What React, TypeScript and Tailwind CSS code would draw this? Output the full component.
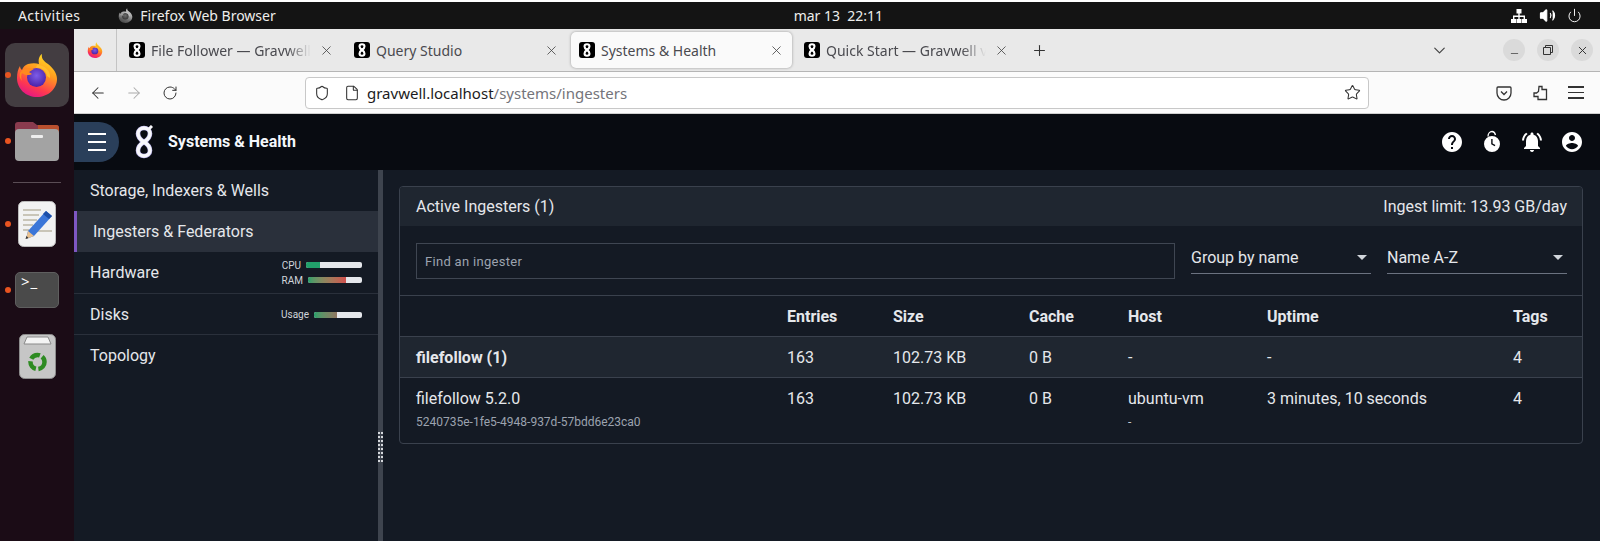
// Dependencies.
import { ArrowLeft, ArrowRight, ChevronDown, File, Minus, Plus, Power, RotateCw, Shield, Star, Volume2, X } from "lucide-react"

const uiFont = "font-['Noto_Sans','Open_Sans',sans-serif]"
const appFont = "font-['Roboto',sans-serif]"

const mdHelp =
	"M12 2C6.48 2 2 6.48 2 12s4.48 10 10 10 10-4.48 10-10S17.52 2 12 2zm1 17h-2v-2h2v2zm2.07-7.75l-.9.92C13.45 12.9 13 13.5 13 15h-2v-.5c0-1.1.45-2.1 1.17-2.83l1.24-1.26c.37-.36.59-.86.59-1.41 0-1.1-.9-2-2-2s-2 .9-2 2H8c0-2.21 1.79-4 4-4s4 1.79 4 4c0 .88-.36 1.68-.93 2.25z"
const mdBell =
	"M7.58 4.08L6.15 2.65C3.75 4.48 2.17 7.3 2.03 10.5h2c.15-2.65 1.51-4.97 3.55-6.42zm12.39 6.42h2c-.15-3.2-1.73-6.02-4.12-7.85l-1.42 1.43c2.02 1.45 3.39 3.77 3.54 6.42zM18 11c0-3.07-1.64-5.64-4.5-6.32V4c0-.83-.67-1.5-1.5-1.5s-1.5.67-1.5 1.5v.68C7.63 5.36 6 7.92 6 11v5l-2 2v1h16v-1l-2-2v-5zm-6 11c.14 0 .27-.01.4-.04.65-.14 1.18-.58 1.44-1.18.1-.24.15-.5.15-.78h-4c.01 1.1.9 2 2.01 2z"
const mdUser =
	"M12 2C6.48 2 2 6.48 2 12s4.48 10 10 10 10-4.48 10-10S17.52 2 12 2zm0 3c1.66 0 3 1.34 3 3s-1.34 3-3 3-3-1.34-3-3 1.34-3 3-3zm0 14.2c-2.5 0-4.71-1.28-6-3.22.03-1.99 4-3.08 6-3.08 1.99 0 5.97 1.09 6 3.08-1.29 1.94-3.5 3.22-6 3.22z"

const eightPath =
	"M9 17C14 14 15 11 15 8.500 15 5 12 3 9 3 6 3 3 5 3 8.500 3 11 4 14 9 17 14 20 15 23 15 25.500 15 29 12 31 9 31 6 31 3 29 3 25.500 3 23 4 20 9 17Z"

// Firefox logo.
function Firefox({ id, className }: { id: string; className: string }) {
	return (
		<svg viewBox="0 0 44 44" className={className}>
			<defs>
				<linearGradient id={`${id}-a`} x1="0.75" y1="0" x2="0.3" y2="1">
					<stop offset="0" stopColor="#ffe226" />
					<stop offset="0.4" stopColor="#ff9a1f" />
					<stop offset="0.75" stopColor="#ff3a4e" />
					<stop offset="1" stopColor="#e31587" />
				</linearGradient>
				<radialGradient id={`${id}-b`} cx="0.5" cy="0.4" r="0.6">
					<stop offset="0" stopColor="#7d5ce8" />
					<stop offset="1" stopColor="#4b22a8" />
				</radialGradient>
			</defs>
			<path
				d="M27 1c-1 5 2 7 6 10 5 4 9 9 9 15 0 10-9 18-20 18S2 36 2 25c0-5 1-9 3-12 0 2 1 3 2 4 1-3 3-5 6-6 4-1 8-1 11 0-1-4 0-8 3-10z"
				fill={`url(#${id}-a)`}
			/>
			<circle cx="21.5" cy="24.5" r="9.5" fill={`url(#${id}-b)`} />
			<path d="M21 15c5-1 10 2 11 8l3 2c1-7-5-13-13-13z" fill="#ffbd2e" />
			<path d="M5 20c3-5 9-6 14-4-2 1-3 2-5 3l3 2c-3 2-8 1-10-1-1 2-1 5 0 8-2-2-3-5-2-8z" fill="#ff8a1f" />
		</svg>
	)
}

// Gravwell "8" mark.
function GravMark() {
	return (
		<svg viewBox="0 0 18 34" className="h-[34px] w-[18px]" fill="none">
			<path d={eightPath} stroke="#b9b4e8" strokeWidth="4.6" />
			<path d={eightPath} stroke="#f7f7fb" strokeWidth="3.4" />
			<path d="M13 5 17 1" stroke="#f7f7fb" strokeWidth="3" />
		</svg>
	)
}

function Favicon() {
	return (
		<div className="flex h-4 w-4 shrink-0 items-center justify-center rounded-[3px] bg-black">
			<svg viewBox="0 0 18 34" className="h-[14px] w-[8px]" fill="none">
				<path d={eightPath} stroke="#fff" strokeWidth="5" />
			</svg>
		</div>
	)
}

function Tab({ title, active, fade }: { title: string; active?: boolean; fade?: boolean }) {
	return (
		<div
			className={`flex h-9 w-[221px] items-center rounded-[5px] pr-2 pl-2 ${
				active ? "bg-[#fafafa] shadow-[0_0_3px_rgba(0,0,0,0.35)]" : ""
			}`}
		>
			<Favicon />
			<span
				className={`ml-[6px] min-w-0 flex-1 overflow-hidden whitespace-nowrap text-[#4a4a4f] text-[14px] ${uiFont} ${
					fade ? "[mask-image:linear-gradient(to_right,black_85%,transparent)]" : ""
				}`}
			>
				{title}
			</span>
			<X className="ml-2 h-[15px] w-[15px] shrink-0 text-[#444]" strokeWidth={1.3} />
		</div>
	)
}

function WindowButton({ children }: { children: React.ReactNode }) {
	return <div className="flex h-[22px] w-[22px] items-center justify-center rounded-full bg-[#dadada] text-[#333]">{children}</div>
}

function DockItem({ running, children }: { running?: boolean; children: React.ReactNode }) {
	return (
		<div className="relative flex h-[66px] w-full items-center justify-center">
			{running && <span className="absolute top-[30px] left-[5px] h-[6px] w-[6px] rounded-full bg-[#e95420]" />}
			{children}
		</div>
	)
}

function Dock() {
	return (
		<aside className="flex w-[74px] shrink-0 flex-col items-center bg-[#1b0c16] pt-[13px]">
			<DockItem running>
				<div className="flex h-16 w-16 items-center justify-center rounded-[10px] bg-[#433d41]">
					<Firefox id="dock" className="h-[44px] w-[44px]" />
				</div>
			</DockItem>
			<DockItem running>
				<svg viewBox="0 0 46 42" className="h-[42px] w-[46px]">
					<path d="M1 5a3 3 0 0 1 3-3h15l4 3h19a3 3 0 0 1 3 3v10H1z" fill="#8a3b4e" />
					<path d="M24 5h18a3 3 0 0 1 3 3v8H24z" fill="#b9502e" />
					<rect x="1" y="9" width="44" height="32" rx="4" fill="#a3a3a3" />
					<rect x="17" y="15" width="12" height="3" rx="1" fill="#eee" />
				</svg>
			</DockItem>
			<div className="mt-[8px] mb-[8px] h-px w-12 bg-[#5a4d55]" />
			<DockItem running>
				<svg viewBox="0 0 38 46" className="h-[46px] w-[38px]">
					<rect x="0.500" y="0.500" width="37" height="45" rx="5" fill="#f2f2f2" stroke="#bbb" />
					<path d="M5 9h18M5 14h16M5 19h14M5 24h10M5 29h6M18 30h16" stroke="#c9c5b8" strokeWidth="2" />
					<path d="M10 30 28 10l6 5-18 20-8 3z" fill="#3b76d8" />
					<path d="M28 10l6 5-3 3-6-5z" fill="#1c4fa8" />
					<path d="M10 30l6 5-8 3z" fill="#e9c08f" />
					<path d="M8.500 35l2 2-3 1z" fill="#333" />
				</svg>
			</DockItem>
			<DockItem running>
				<div className="h-[36px] w-[44px] rounded-[5px] border border-[#5f5f5f] bg-[#4a4a4a] pl-[5px] text-[15px] text-white leading-[17px] tracking-[1px]">
					<span className={`${uiFont}`}>{">_"}</span>
				</div>
			</DockItem>
			<DockItem>
				<svg viewBox="0 0 37 45" className="h-[45px] w-[37px]">
					<rect x="0.500" y="0.500" width="36" height="44" rx="5" fill="#c6c6c6" stroke="#8d8d8d" />
					<path d="M5 10 8 3h21l3 7z" fill="#f4f4f4" stroke="#8a8a8a" />
					<circle cx="18.500" cy="28" r="7" fill="none" stroke="#2e8b22" strokeWidth="4.500" strokeDasharray="10 2.600" />
				</svg>
			</DockItem>
		</aside>
	)
}

function TopBar() {
	return (
		<header className={`flex h-[27px] shrink-0 items-center bg-[#141414] text-[#eeeeec] text-[14px] ${uiFont}`}>
			<span className="ml-[18px] tracking-[0.4px]">Activities</span>
			<Firefox id="top" className="ml-[38px] h-[15px] w-[15px] grayscale" />
			<span className="ml-[7px]">Firefox Web Browser</span>
			<div className="flex flex-1 justify-center">
				<span className="ml-[-110px] whitespace-pre">mar 13  22:11</span>
			</div>
			<svg viewBox="0 0 16 16" className="h-4 w-4" fill="#fff">
				<path d="M5.500 1h5v4.500h-5zM7.300 5.500h1.400v2H14V11h-1.400V9H8.700v2H7.300V9H3.400v2H2V7.500h5.300zM0 11h5v4H0zM5.500 11h5v4h-5zM11 11h5v4h-5z" />
			</svg>
			<Volume2 className="ml-[12px] h-[17px] w-[17px] fill-white text-white" strokeWidth={1.5} />
			<Power className="mr-[18px] ml-[11px] h-[15px] w-[15px] text-white" strokeWidth={1.5} />
		</header>
	)
}

function BrowserChrome() {
	return (
		<>
			<div className="flex h-[43px] shrink-0 items-center border-[#b5b5b5] border-b bg-[#e9e9e9]">
				<div className="flex h-full w-[43px] shrink-0 items-center justify-center border-[#c4c4c4] border-r">
					<Firefox id="view" className="h-4 w-4" />
				</div>
				<div className="ml-1 flex gap-1">
					<Tab title="File Follower — Gravwell" fade />
					<Tab title="Query Studio" />
					<Tab title="Systems & Health" active />
					<Tab title="Quick Start — Gravwell v" fade />
				</div>
				<Plus className="ml-[14px] h-[17px] w-[17px] text-[#333]" strokeWidth={1.5} />
				<ChevronDown className="ml-[382px] h-[19px] w-[19px] text-[#444]" strokeWidth={1.5} />
				<div className="ml-[54px] flex gap-3">
					<WindowButton>
						<Minus className="mt-[6px] h-[11px] w-[11px]" strokeWidth={1.5} />
					</WindowButton>
					<WindowButton>
						<svg viewBox="0 0 10 10" className="h-[10px] w-[10px]" fill="none" stroke="#333">
							<path d="M.5 2.500h7v7h-7zM2.500 2.500v-2h7v7h-2" />
						</svg>
					</WindowButton>
					<WindowButton>
						<X className="h-[13px] w-[13px]" strokeWidth={1.8} />
					</WindowButton>
				</div>
			</div>
			<div className="flex h-[42px] shrink-0 items-center border-[#cfcfcf] border-b bg-[#fbfbfb]">
				<ArrowLeft className="ml-[15px] h-[18px] w-[18px] text-[#333]" strokeWidth={1.4} />
				<ArrowRight className="ml-[18px] h-[18px] w-[18px] text-[#aaa]" strokeWidth={1.4} />
				<RotateCw className="ml-[19px] h-4 w-4 text-[#333]" strokeWidth={1.5} />
				<div className="ml-[127px] flex h-[32px] w-[1064px] items-center rounded-[4px] border border-[#c8c8c8] bg-white pr-[7px] pl-[8px]">
					<Shield className="h-4 w-4 text-[#333]" strokeWidth={1.6} />
					<File className="ml-[14px] h-4 w-4 text-[#333]" strokeWidth={1.6} />
					<span className={`mt-px ml-[7px] flex-1 text-[#1c1b22] text-[15px] ${uiFont}`}>
						gravwell.localhost<span className="text-[#74747a]">/systems/ingesters</span>
					</span>
					<Star className="h-[17px] w-[17px] text-[#333]" strokeWidth={1.5} />
				</div>
				<svg viewBox="0 0 16 16" className="ml-[127px] h-4 w-4" fill="none" stroke="#333" strokeWidth="1.3">
					<path d="M2 2h12a1 1 0 0 1 1 1v5a7 7 0 0 1-14 0V3a1 1 0 0 1 1-1z" />
					<path d="M5 6.500 8 9.500l3-3" />
				</svg>
				<svg viewBox="0 0 16 16" className="ml-[20px] h-4 w-4" fill="none" stroke="#333" strokeWidth="1.3">
					<path d="M7 1.500h3v3h4.500v10H6v-3H2V8h2.500l2-1.500z" />
				</svg>
				<div className="ml-[20px] flex w-4 flex-col gap-[4px]">
					<div className="h-[1.5px] bg-[#333]" />
					<div className="h-[1.5px] bg-[#333]" />
					<div className="h-[1.5px] bg-[#333]" />
				</div>
			</div>
		</>
	)
}

function AppHeader() {
	return (
		<header className="flex h-[56px] shrink-0 items-center bg-[#080b11] text-white">
			<div className="flex h-10 w-[45px] flex-col items-start justify-center gap-[6px] rounded-r-full bg-[#2a3f5a] pl-[14px]">
				<div className="h-[2px] w-[18px] bg-white" />
				<div className="h-[2px] w-[18px] bg-white" />
				<div className="h-[2px] w-[18px] bg-white" />
			</div>
			<div className="ml-4">
				<GravMark />
			</div>
			<h1 className="ml-[15px] flex-1 font-bold text-[#f4f7fb] text-[16px]">Systems &amp; Health</h1>
			<div className="flex items-center gap-[16px] pr-[16px]">
				<svg viewBox="0 0 24 24" className="h-6 w-6" fill="#fff">
					<path d={mdHelp} />
				</svg>
				<svg viewBox="0 0 24 24" className="h-6 w-6" fill="#fff">
					<path fillRule="evenodd" d="M12 6a8 8 0 1 1 0 16 8 8 0 0 1 0-16zm-.800 3v5.300l3.500 2 .7-1.200-2.800-1.600V9z" />
					<path d="M8 6.500C8 3.500 10 1.500 12 1.500s3 1.500 3.500 3.500" fill="none" stroke="#fff" strokeWidth="1.300" />
				</svg>
				<svg viewBox="0 0 24 24" className="h-6 w-6" fill="#fff">
					<path d={mdBell} />
				</svg>
				<svg viewBox="0 0 24 24" className="h-6 w-6" fill="#fff">
					<path d={mdUser} />
				</svg>
			</div>
		</header>
	)
}

function UsageBar({ label, track, fill }: { label: string; track: string; fill: string }) {
	return (
		<div className="flex h-[15px] items-center justify-end gap-[5px] text-[#d1d5db] text-[10px]">
			<span>{label}</span>
			<div className={`h-[6px] overflow-hidden rounded-[2px] bg-[#e5e7eb] ${track}`}>
				<div className={`h-full ${fill}`} />
			</div>
		</div>
	)
}

function Sidebar() {
	return (
		<nav className="flex w-[304px] shrink-0 flex-col text-[#e5e7eb] text-[16px]">
			<div className="flex h-[41px] items-center pl-4">Storage, Indexers &amp; Wells</div>
			<div className="flex h-[41px] items-center border-[#7e57c2] border-l-[3px] bg-[#2a303b] pl-4">Ingesters &amp; Federators</div>
			<div className="flex h-[42px] items-center justify-between border-[#2a303b] border-b pr-4 pl-4">
				Hardware
				<div className="flex flex-col">
					<UsageBar label="CPU" track="w-[56px]" fill="w-[14px] bg-[#22a06b]" />
					<UsageBar label="RAM" track="w-[54px]" fill="w-[38px] bg-gradient-to-r from-[#22a06b] to-[#d0504f]" />
				</div>
			</div>
			<div className="flex h-[41px] items-center justify-between border-[#2a303b] border-b pt-px pr-4 pl-4">
				Disks
				<UsageBar label="Usage" track="w-[48px]" fill="w-[23px] bg-gradient-to-r from-[#22a06b] to-[#8f7560]" />
			</div>
			<div className="flex h-[41px] items-center pl-4">Topology</div>
		</nav>
	)
}

const columns = "grid grid-cols-[371px_106px_136px_99px_139px_246px_1fr] items-center border-[#3a414d] px-4"

function Panel() {
	return (
		<section className="overflow-hidden rounded-[4px] border border-[#3a414d] text-[#e5e7eb] text-[16px]">
			<div className="flex h-[39px] items-center justify-between bg-[#1f2630] pt-px pr-[15px] pl-4">
				<span>Active Ingesters (1)</span>
				<span>Ingest limit: 13.93 GB/day</span>
			</div>
			<div className="flex h-[70px] items-start gap-4 border-[#3a414d] border-b pt-[17px] pr-[15px] pl-4">
				<div className="flex h-9 flex-1 items-center border border-[#3f4652] px-2 pt-px text-[#9ca3af] text-[13px] tracking-[0.3px]">Find an ingester</div>
				<Select label="Group by name" />
				<Select label="Name A-Z" />
			</div>
			<div className={`${columns} h-[41px] border-b pt-px font-bold`}>
				<span />
				<span>Entries</span>
				<span>Size</span>
				<span>Cache</span>
				<span>Host</span>
				<span>Uptime</span>
				<span>Tags</span>
			</div>
			<div className={`${columns} h-[41px] border-b bg-[#1f2630] pt-px`}>
				<span className="font-bold">filefollow (1)</span>
				<span>163</span>
				<span>102.73 KB</span>
				<span>0 B</span>
				<span>-</span>
				<span>-</span>
				<span>4</span>
			</div>
			<div className={`${columns} h-[65px] !items-start pt-[9px]`}>
				<div className="flex flex-col">
					<span>filefollow 5.2.0</span>
					<span className="mt-[2px] text-[#9ca3af] text-[12px]">5240735e-1fe5-4948-937d-57bdd6e23ca0</span>
				</div>
				<span>163</span>
				<span>102.73 KB</span>
				<span>0 B</span>
				<div className="flex flex-col">
					<span>ubuntu-vm</span>
					<span className="mt-[2px] text-[#c4c8ce] text-[12px]">-</span>
				</div>
				<span>3 minutes, 10 seconds</span>
				<span>4</span>
			</div>
		</section>
	)
}

function Select({ label }: { label: string }) {
	return (
		<div className="flex h-[31px] w-[180px] items-center justify-between border-[#6b7280] border-b pr-[4px]">
			{label}
			<div className="mb-[2px] h-0 w-0 border-x-[5px] border-x-transparent border-t-[5px] border-t-[#d1d5db]" />
		</div>
	)
}

export default function App() {
	return (
		<div className={`h-[541px] w-[1600px] overflow-hidden bg-white pt-[2px] ${appFont}`}>
			<TopBar />
			<div className="flex h-[512px]">
				<Dock />
				<main className="flex min-w-0 flex-1 flex-col">
					<BrowserChrome />
					<AppHeader />
					<div className="flex min-h-0 flex-1 bg-[#141a24]">
						<Sidebar />
						<div className="grid w-[5px] shrink-0 grid-cols-[2px_2px] content-start gap-x-[1px] gap-y-[2px] bg-[#3e444e] pt-[262px]">
							{Array.from({ length: 16 }).map((_, i) => (
								<span key={i} className="h-[2px] w-[2px] bg-[#d5d8dc]" />
							))}
						</div>
						<div className="min-w-0 flex-1 pt-4 pr-[17px] pl-4">
							<Panel />
						</div>
					</div>
				</main>
			</div>
		</div>
	)
}
